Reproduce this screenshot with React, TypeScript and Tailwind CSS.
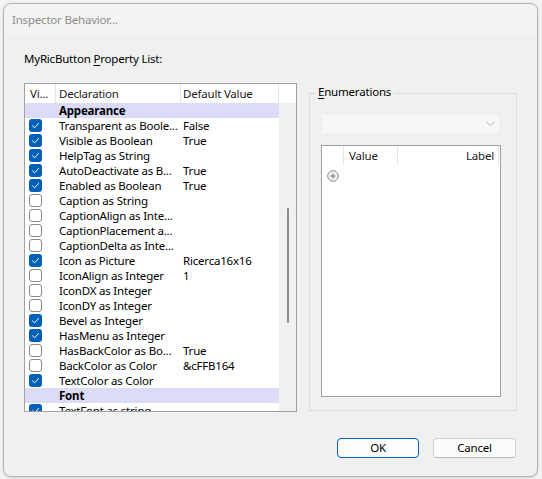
import React from "react";

type Row = { group?: string; c?: boolean; d?: string; v?: string };

const rows: Row[] = [
  { group: "Appearance" },
  { c: true, d: "Transparent as Boole...", v: "False" },
  { c: true, d: "Visible as Boolean", v: "True" },
  { c: true, d: "HelpTag as String" },
  { c: true, d: "AutoDeactivate as B...", v: "True" },
  { c: true, d: "Enabled as Boolean", v: "True" },
  { c: false, d: "Caption as String" },
  { c: false, d: "CaptionAlign as Inte..." },
  { c: false, d: "CaptionPlacement a..." },
  { c: false, d: "CaptionDelta as Inte..." },
  { c: true, d: "Icon as Picture", v: "Ricerca16x16" },
  { c: false, d: "IconAlign as Integer", v: "1" },
  { c: false, d: "IconDX as Integer" },
  { c: false, d: "IconDY as Integer" },
  { c: true, d: "Bevel as Integer" },
  { c: true, d: "HasMenu as Integer" },
  { c: false, d: "HasBackColor as Bo...", v: "True" },
  { c: false, d: "BackColor as Color", v: "&cFFB164" },
  { c: true, d: "TextColor as Color" },
  { group: "Font" },
  { c: true, d: "TextFont as string" },
];

const CheckBox = ({ checked }: { checked: boolean }) =>
  checked ? (
    <div className="w-[13px] h-[13px] rounded-[3px] bg-[#005fb8] flex items-center justify-center">
      <svg width="9" height="9" viewBox="0 0 9 9" fill="none">
        <path d="M1.5 4.8 L3.6 6.8 L7.6 2.4" stroke="#ffffff" strokeWidth="1" strokeLinecap="round" strokeLinejoin="round" />
      </svg>
    </div>
  ) : (
    <div className="w-[13px] h-[13px] rounded-[3px] bg-white border border-[#8a8a8a]" />
  );

const PropertyList = () => (
  <div className="w-[273px] h-[329px] border border-[#a0a0a0] bg-white flex flex-col overflow-hidden">
    {/* header */}
    <div className="flex h-[19px] shrink-0 bg-white items-center text-[#1a1a1a]">
      <div className="w-[31px] h-full pl-[5px] border-r border-[#e5e5e5] flex items-center">Vi...</div>
      <div className="w-[125px] h-full pl-[3px] border-r border-[#e5e5e5] flex items-center">Declaration</div>
      <div className="w-[98px] h-full pl-[2px] border-r border-[#e5e5e5] flex items-center">Default Value</div>
      <div className="flex-1" />
    </div>
    <div className="flex flex-1 min-h-0">
      <div className="w-[254px] overflow-hidden">
        {rows.map((r, i) =>
          r.group ? (
            <div key={i} className="h-[15px] flex items-center bg-[#dcdcf8]">
              <div className="w-[31px]" />
              <div className="pl-[3px] font-bold text-black">{r.group}</div>
            </div>
          ) : (
            <div key={i} className="h-[15px] flex items-center text-black">
              <div className="w-[31px] pl-[4px] flex items-center">
                <CheckBox checked={!!r.c} />
              </div>
              <div className="w-[125px] pl-[3px] whitespace-nowrap">{r.d}</div>
              <div className="w-[98px] pl-[2px] whitespace-nowrap">{r.v}</div>
            </div>
          )
        )}
      </div>
      <div className="w-[17px] bg-[#f0f0f0] flex flex-col items-center pt-[105px]">
        <div className="w-[2px] h-[115px] rounded-full bg-[#8b8b8b]" />
      </div>
    </div>
  </div>
);

const EnumGroup = () => (
  <div className="relative w-[208px] h-[318px] border border-[#dcdcdc] pt-[19px] pl-[11px]">
    <span className="absolute left-[5px] -top-[10px] px-[3px] bg-[#f0f0f0] leading-[15px] text-black">
      <u className="underline-offset-2">E</u>numerations
    </span>
    <div className="w-[180px] h-[22px] rounded-[3px] bg-[#f6f6f6] border border-[#ebebeb] flex items-center justify-end pr-[5px]">
      <svg width="9" height="6" viewBox="0 0 9 6" fill="none">
        <path d="M0.5 0.8 L4.5 4.8 L8.5 0.8" stroke="#b4b4b4" strokeWidth="1" />
      </svg>
    </div>
    <div className="mt-[10px] w-[180px] h-[252px] border border-[#a0a0a0] bg-white">
      <div className="flex h-[19px] items-center text-[#1a1a1a]">
        <div className="w-[22px] h-full border-r border-[#e5e5e5]" />
        <div className="w-[54px] h-full pl-[5px] border-r border-[#e5e5e5] flex items-center">Value</div>
        <div className="flex-1 h-full pr-[4px] border-r border-[#e5e5e5] flex items-center justify-end">Label</div>
        <div className="w-[1px]" />
      </div>
      <div className="pl-[5px] pt-[5px]">
        <svg width="12" height="12" viewBox="0 0 12 12" fill="none">
          <circle cx="6" cy="6" r="5.3" stroke="#8a8a8a" strokeWidth="1" fill="#f4f4f4" />
          <path d="M6 3.2 V8.8 M3.2 6 H8.8" stroke="#7a7a7a" strokeWidth="1.2" />
        </svg>
      </div>
    </div>
  </div>
);

export default function App() {
  return (
    <div
      className="w-[542px] h-[479px] bg-[#f3f3f3] pt-[3px] pl-[3px] text-[11.5px] leading-[15px] tracking-[-0.2px]"
      style={{ fontFamily: '"Noto Sans", "Liberation Sans", sans-serif' }}
    >
      <div className="w-[535px] h-[474px] rounded-[8px] border border-[#b4b4b4] bg-[#f0f0f0] shadow-[0_1px_3px_rgba(0,0,0,0.15)] flex flex-col overflow-hidden">
        <div className="h-[30px] shrink-0 bg-[#f3f3f3] flex items-center pl-[8px] text-[#8c8c8c]">
          Inspector Behavior...
        </div>
        <div className="px-[20px] pt-[17px] flex flex-col">
          <div className="flex gap-[12px]">
            <div className="flex flex-col">
              <div className="h-[15px] mb-[17px] text-black">
                MyRicButton <u className="underline-offset-2">P</u>roperty List:
              </div>
              <PropertyList />
            </div>
            <div className="mt-[42px]">
              <EnumGroup />
            </div>
          </div>
          <div className="mt-[26px] flex justify-end gap-[14px] pr-[1px]">
            <button className="w-[82px] h-[20px] rounded-[4px] border border-[#005fb8] bg-[#fdfdfd] text-black leading-none">
              OK
            </button>
            <button className="w-[83px] h-[20px] rounded-[4px] border border-[#d0d0d0] border-b-[#b8b8b8] bg-[#fbfbfb] text-black leading-none">
              Cancel
            </button>
          </div>
        </div>
      </div>
    </div>
  );
}
